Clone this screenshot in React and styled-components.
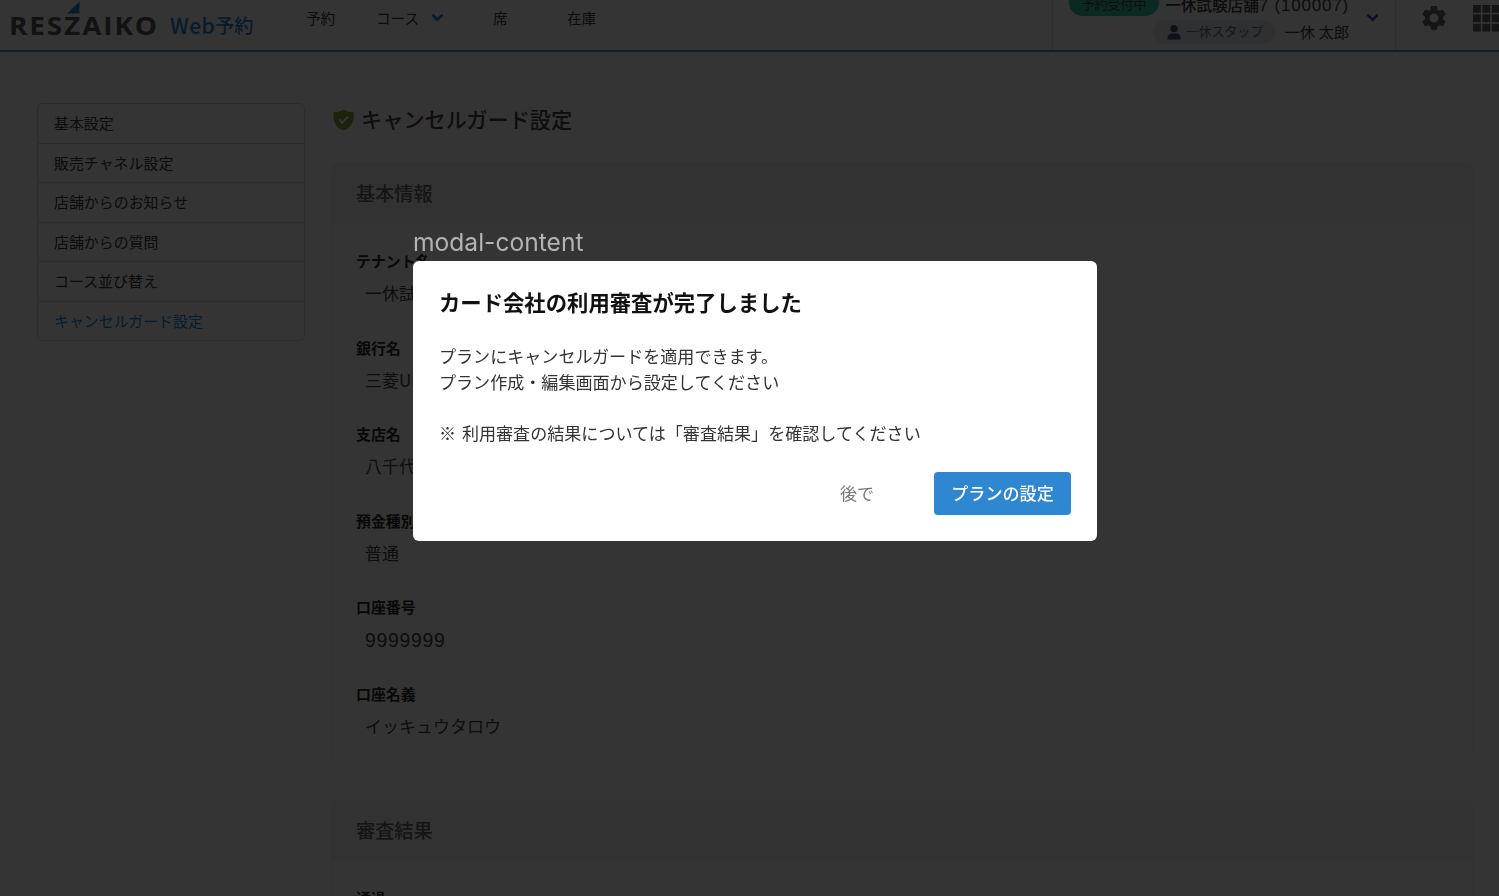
import styled, { createGlobalStyle } from "styled-components";
import { MdSettings } from "react-icons/md";

const GlobalStyle = createGlobalStyle`
  * {
    box-sizing: border-box;
  }

  body {
    margin: 0;
    overflow: hidden;
    background-color: #fff;
    color: #3c3c3c;
    font-family: "Noto Sans CJK JP", sans-serif;
  }

  svg {
    display: block;
  }
`;

const menuItems = [
  "基本設定",
  "販売チャネル設定",
  "店舗からのお知らせ",
  "店舗からの質問",
  "コース並び替え",
  "キャンセルガード設定",
];

const accountInfo = [
  { label: "テナント名", value: "一休試験店舗7" },
  { label: "銀行名", value: "三菱UFJ銀行" },
  { label: "支店名", value: "八千代支店" },
  { label: "預金種別", value: "普通" },
  { label: "口座番号", value: "9999999", numeric: true },
  { label: "口座名義", value: "イッキュウタロウ" },
];

const Page = styled.div`
  width: 100%;
  height: 896px;
  overflow: hidden;
`;

const HeaderBar = styled.header`
  display: flex;
  height: 52px;
  overflow: hidden;
  border-bottom: 2px solid #4c9fcc;
`;

const LogoLink = styled.div`
  display: flex;
  width: 306px;
  padding-left: 10px;
`;

const LogoSub = styled.div`
  display: flex;
  margin: 10px 0 0 11px;
  height: 30px;
  align-items: center;
  font-size: 19.2px;
  font-weight: 500;
  color: #2b87d1;

  span {
    font-size: 21px;
    letter-spacing: 0.4px;
  }
`;

const Nav = styled.nav`
  display: flex;
  flex: 1;
  height: 34px;
  align-items: center;
  font-size: 14.6px;
`;

const NavItem = styled.div`
  display: flex;
  align-items: center;
  gap: 12px;
  width: ${(props) => props.$width}px;

  svg {
    margin-top: 2px;
  }
`;

const Account = styled.div`
  display: flex;
  width: 344px;
  height: 50px;
  border-left: 1px solid #ddd;
  border-right: 1px solid #ddd;
  padding-left: 16px;
`;

const StatusBadge = styled.div`
  width: 90px;
  height: 27px;
  margin-top: -11px;
  border-radius: 14px;
  background-color: #38c9a8;
  color: #444;
  font-size: 13px;
  line-height: 30px;
  text-align: center;
`;

const AccountInfo = styled.div`
  display: flex;
  flex-direction: column;
  align-items: flex-end;
  width: 190px;
`;

const StoreName = styled.div`
  height: 20px;
  margin-top: -6px;
  font-size: 15.6px;
  font-weight: 500;
  line-height: 20px;
  white-space: nowrap;

  span {
    font-family: "Liberation Sans", sans-serif;
    font-size: 17px;
    letter-spacing: 0.8px;
  }
`;

const StaffRow = styled.div`
  display: flex;
  align-items: center;
  gap: 9px;
  height: 24px;
  margin-top: 6px;
  font-size: 15.3px;
  line-height: 22px;
  white-space: nowrap;
`;

const StaffName = styled.div`
  height: 24px;
`;

const StaffTag = styled.div`
  display: flex;
  align-items: center;
  gap: 4px;
  width: 122px;
  height: 24px;
  padding-left: 14px;
  border-radius: 12px;
  background-color: #e4e8f0;
  color: #6b7285;
  font-size: 13px;

  span {
    height: 24px;
  }
`;

const AccountToggle = styled.div`
  margin: 13px 0 0 17px;
`;

const Tools = styled.div`
  display: flex;
  width: 103px;
  height: 50px;
  padding-left: 23px;
  overflow: hidden;
  color: #666;

  svg {
    flex: none;
  }
`;

const SettingsButton = styled.div`
  width: 30px;
  margin: 3px 24px 0 0;
`;

const AppsButton = styled.div`
  margin-top: 5px;
`;

const Columns = styled.div`
  display: flex;
  align-items: flex-start;
  gap: 26px;
  padding: 51px 26px 0 37px;
`;

const Menu = styled.ul`
  flex: none;
  width: 268px;
  margin: 0;
  padding: 0;
  list-style: none;
  border: 1px solid #d5d5d5;
  border-radius: 6px;
`;

const MenuItem = styled.li`
  display: flex;
  align-items: center;
  height: 39.5px;
  padding: 0 0 1px 16px;
  font-size: 14.95px;
  color: ${(props) => (props.$active ? "#2b87d1" : "#3c3c3c")};

  & + & {
    border-top: 1px solid #d5d5d5;
  }

  &:first-child {
    height: 38.5px;
  }
`;

const Main = styled.main`
  flex: 1;
`;

const PageTitle = styled.h1`
  display: flex;
  align-items: center;
  gap: 7px;
  height: 30px;
  margin: 0 0 29px 2px;
  font-size: 21.2px;
  font-weight: 500;
  color: #444;

  svg {
    margin-top: 3px;
  }
`;

const Card = styled.section`
  height: 602px;
  margin-bottom: 35px;
  border: 1px solid #f2f2f2;
  border-radius: 8px;
  overflow: hidden;
`;

const CardHeader = styled.h2`
  display: flex;
  align-items: center;
  height: 61px;
  margin: 0;
  padding: 0 0 2px 24px;
  background-color: #f5f5f5;
  font-size: 19.2px;
  font-weight: 500;
  color: #666;
`;

const CardBody = styled.dl`
  margin: 0;
  padding: 26px 24px 0;
`;

const Field = styled.div`
  height: 86.5px;
`;

const FieldLabel = styled.dt`
  font-size: 14.9px;
  font-weight: 700;
  line-height: 22px;
  color: #2a2a2a;
`;

const FieldValue = styled.dd`
  margin: ${(props) => (props.$numeric ? 9 : 8)}px 0 0 9px;
  font-family: ${(props) =>
    props.$numeric ? '"Liberation Sans"' : '"Noto Sans CJK JP"'}, sans-serif;
  font-size: ${(props) => (props.$numeric ? "19.4px" : "17px")};
  letter-spacing: ${(props) => (props.$numeric ? "0.7px" : "0")};
  line-height: 26px;
  color: #444;
`;

const Overlay = styled.div`
  position: fixed;
  inset: 0;
  padding: 226px 0 0 413px;
  background-color: rgba(0, 0, 0, 0.795);
`;

const ModalCaption = styled.div`
  height: 35px;
  font-family: Inter, sans-serif;
  font-size: 24.6px;
  line-height: 33px;
  color: #b3b3b3;
`;

const Modal = styled.div`
  width: 684px;
  height: 280px;
  padding: 25px 26px;
  border-radius: 6px;
  background-color: #fff;
`;

const ModalTitle = styled.h2`
  margin: 0 0 25px;
  font-size: 21.35px;
  font-weight: 700;
  line-height: 32px;
  color: #111;
`;

const ModalText = styled.p`
  margin: 0;
  font-size: 17.07px;
  line-height: 25.7px;
  word-spacing: 2px;
  white-space: pre-line;
  color: #333;
`;

const ModalActions = styled.div`
  display: flex;
  justify-content: flex-end;
  margin-top: 26px;
`;

const Button = styled.button`
  width: ${(props) => (props.$primary ? 137 : 154)}px;
  height: 43px;
  padding: 0 0 2px;
  border: none;
  border-radius: 4px;
  background-color: ${(props) => (props.$primary ? "#3087d1" : "transparent")};
  color: ${(props) => (props.$primary ? "#fff" : "#777")};
  font-family: inherit;
  font-size: 17.1px;
  font-weight: ${(props) => (props.$primary ? 500 : 400)};
`;

const Logo = () => (
  <svg width="149" height="50" viewBox="0 0 149 50">
    <path d="M57 13.5L69.5 1.5V13.5Z" fill="#2b87d1" />
    <text
      x="-1"
      y="35"
      textLength="150"
      lengthAdjust="spacingAndGlyphs"
      letterSpacing="1.6"
      fontFamily="Open Sans, sans-serif"
      fontSize="24.5"
      fontWeight="700"
      fill="#5a5a5a"
    >
      RESZAIKO
    </text>
  </svg>
);

const Chevron = ({ color }) => (
  <svg width="13" height="10" viewBox="0 0 13 10" fill="none">
    <path d="M1.5 1.8L6.5 6.6L11.5 1.8" stroke={color} strokeWidth="2.6" />
  </svg>
);

const PersonIcon = () => (
  <svg width="14" height="15" viewBox="0 0 14 15" fill="#4a5578">
    <circle cx="7" cy="3.7" r="3.6" />
    <path d="M0.5 14.5V13C0.5 10 2.7 8.6 5 8.6H9C11.3 8.6 13.5 10 13.5 13V14.5Z" />
  </svg>
);

const AppsIcon = () => (
  <svg width="27" height="27" viewBox="0 0 27 27" fill="#666">
    {[0, 9.4, 18.8].map((y) =>
      [0, 9.4, 18.8].map((x) => (
        <rect key={`${x}-${y}`} x={x} y={y} width="7.8" height="7.8" />
      ))
    )}
  </svg>
);

const ShieldIcon = () => (
  <svg width="21" height="22" viewBox="0 0 21 22">
    <path
      d="M10.5 0.5C13.6 2.5 16.8 3.2 20.6 3.3C21.1 12.2 18.7 18.6 10.5 21.5C2.3 18.6 -0.1 12.2 0.4 3.3C4.2 3.2 7.4 2.5 10.5 0.5Z"
      fill="#74ad2c"
    />
    <path d="M6 10.5L9.2 13.5L15 7.7" fill="none" stroke="#fff" strokeWidth="2" />
  </svg>
);

const Header = () => {
  return (
    <HeaderBar>
      <LogoLink>
        <Logo />
        <LogoSub>
          <span>Web</span>予約
        </LogoSub>
      </LogoLink>
      <Nav>
        <NavItem $width={70}>予約</NavItem>
        <NavItem $width={117}>
          コース
          <Chevron color="#2b87d1" />
        </NavItem>
        <NavItem $width={74}>席</NavItem>
        <NavItem $width={60}>在庫</NavItem>
      </Nav>
      <Account>
        <StatusBadge>予約受付中</StatusBadge>
        <AccountInfo>
          <StoreName>
            一休試験店舗<span>7 (100007)</span>
          </StoreName>
          <StaffRow>
            <StaffTag>
              <PersonIcon />
              <span>一休スタップ</span>
            </StaffTag>
            <StaffName>一休 太郎</StaffName>
          </StaffRow>
        </AccountInfo>
        <AccountToggle>
          <Chevron color="#3f51b5" />
        </AccountToggle>
      </Account>
      <Tools>
        <SettingsButton>
          <MdSettings size={30} />
        </SettingsButton>
        <AppsButton>
          <AppsIcon />
        </AppsButton>
      </Tools>
    </HeaderBar>
  );
};

const CompleteModal = () => {
  return (
    <Overlay>
      <ModalCaption>modal-content</ModalCaption>
      <Modal>
        <ModalTitle>カード会社の利用審査が完了しました</ModalTitle>
        <ModalText>
          {"プランにキャンセルガードを適用できます。\nプラン作成・編集画面から設定してください\n\n※ 利用審査の結果については「審査結果」を確認してください"}
        </ModalText>
        <ModalActions>
          <Button>後で</Button>
          <Button $primary>プランの設定</Button>
        </ModalActions>
      </Modal>
    </Overlay>
  );
};

export default function App() {
  return (
    <Page>
      <GlobalStyle />
      <Header />
      <Columns>
        <Menu>
          {menuItems.map((item) => (
            <MenuItem key={item} $active={item === "キャンセルガード設定"}>
              {item}
            </MenuItem>
          ))}
        </Menu>
        <Main>
          <PageTitle>
            <ShieldIcon />
            キャンセルガード設定
          </PageTitle>
          <Card>
            <CardHeader>基本情報</CardHeader>
            <CardBody>
              {accountInfo.map((info) => (
                <Field key={info.label}>
                  <FieldLabel>{info.label}</FieldLabel>
                  <FieldValue $numeric={info.numeric}>{info.value}</FieldValue>
                </Field>
              ))}
            </CardBody>
          </Card>
          <Card>
            <CardHeader>審査結果</CardHeader>
            <CardBody>
              <FieldLabel>通過</FieldLabel>
            </CardBody>
          </Card>
        </Main>
      </Columns>
      <CompleteModal />
    </Page>
  );
}
